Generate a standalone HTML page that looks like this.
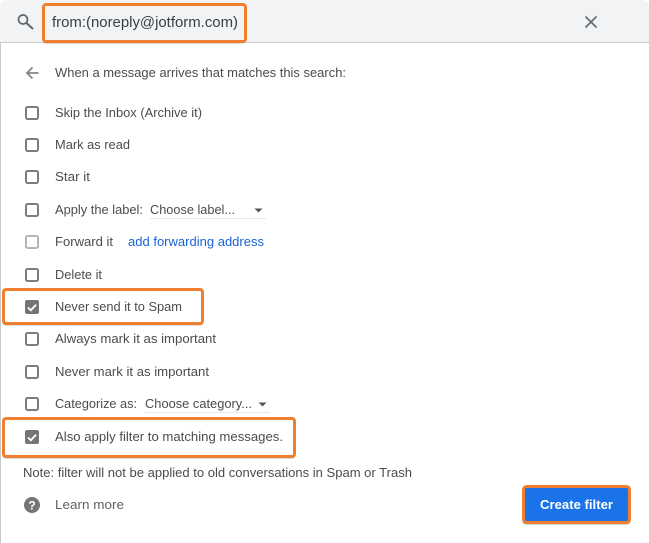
<!DOCTYPE html>
<html lang="en"><head><meta charset="utf-8"><title>Create filter</title>
<style>
html,body{margin:0;padding:0;background:#fff;width:649px;height:543px;overflow:hidden}
svg{display:block;filter:blur(.3px)}
text{font-family:"Liberation Sans",Arial,sans-serif;font-size:13px;fill:#4a4c4e}
.b{fill:none;stroke:#7d7d7d;stroke-width:2}
.o{fill:none;stroke:#f08030;stroke-width:3}
.s{fill:none;stroke:#777;stroke-width:1;opacity:.55}
</style></head><body>
<svg width="649" height="543" viewBox="0 0 649 543" xmlns="http://www.w3.org/2000/svg">
<rect x="0" y="0" width="649" height="543" fill="#fff"/>
<path d="M0 42V8Q0 0 8 0H641Q649 0 649 8V42Z" fill="#f1f3f4"/>
<rect x="0" y="42" width="649" height="1" fill="#cbcbcb"/>
<rect x="0" y="43" width="1" height="500" fill="#c8c8c8"/>

<circle cx="23" cy="19.500" r="4.500" fill="none" stroke="#5f6368" stroke-width="1.700"/>
<path d="M26.500 23L33 29" stroke="#5f6368" stroke-width="1.900" fill="none"/>
<path d="M585.500 16.500L596.500 27.500M596.500 16.500L585.500 27.500" stroke="#686b70" stroke-width="1.700" fill="none"/>
<path d="M38.500 73H27.500M32.500 67.500L27 73L32.500 78.500" stroke="#858585" stroke-width="1.800" fill="none"/>

<text x="52" y="27" style="font-size:14.500px;fill:#3c4043" textLength="186" lengthAdjust="spacingAndGlyphs">from:(noreply@jotform.com)</text>
<text x="55" y="77" textLength="291" lengthAdjust="spacingAndGlyphs">When a message arrives that matches this search:</text>

<rect x="26" y="107" width="12" height="12" rx="1.500" class="b"/>
<rect x="26" y="139" width="12" height="12" rx="1.500" class="b"/>
<rect x="26" y="171" width="12" height="12" rx="1.500" class="b"/>
<rect x="26" y="204" width="12" height="12" rx="1.500" class="b"/>
<rect x="26" y="236" width="12" height="12" rx="1.500" class="b" style="stroke:#b5b5b5"/>
<rect x="26" y="269" width="12" height="12" rx="1.500" class="b"/>
<rect x="25" y="300" width="14" height="14" rx="2" fill="#757575"/>
<path d="M28 307.500L30.800 310.300L36 304.800" stroke="#fff" stroke-width="1.800" fill="none"/>
<rect x="26" y="333" width="12" height="12" rx="1.500" class="b"/>
<rect x="26" y="366" width="12" height="12" rx="1.500" class="b"/>
<rect x="26" y="398" width="12" height="12" rx="1.500" class="b"/>
<rect x="25" y="430" width="14" height="14" rx="2" fill="#757575"/>
<path d="M28 437.500L30.800 440.300L36 434.800" stroke="#fff" stroke-width="1.800" fill="none"/>

<text x="55" y="117" textLength="147" lengthAdjust="spacingAndGlyphs">Skip the Inbox (Archive it)</text>
<text x="55" y="149" textLength="75" lengthAdjust="spacingAndGlyphs">Mark as read</text>
<text x="55" y="181" textLength="35" lengthAdjust="spacingAndGlyphs">Star it</text>
<text x="55" y="214" textLength="88" lengthAdjust="spacingAndGlyphs">Apply the label:</text>
<text x="150" y="214" textLength="85" lengthAdjust="spacingAndGlyphs">Choose label...</text>
<rect x="150" y="218" width="116" height="1" fill="#e8e8e8"/>
<path d="M254.500 208.500H262.500L258.500 212.500Z" fill="#555"/>
<text x="55" y="246" textLength="58" lengthAdjust="spacingAndGlyphs">Forward it</text>
<text x="128" y="246" style="fill:#1a62d6" textLength="136" lengthAdjust="spacingAndGlyphs">add forwarding address</text>
<text x="55" y="279" textLength="47" lengthAdjust="spacingAndGlyphs">Delete it</text>
<text x="55" y="311" textLength="127" lengthAdjust="spacingAndGlyphs">Never send it to Spam</text>
<text x="55" y="343" textLength="161" lengthAdjust="spacingAndGlyphs">Always mark it as important</text>
<text x="55" y="376" textLength="154" lengthAdjust="spacingAndGlyphs">Never mark it as important</text>
<text x="55" y="408" textLength="82" lengthAdjust="spacingAndGlyphs">Categorize as:</text>
<text x="145" y="408" textLength="107" lengthAdjust="spacingAndGlyphs">Choose category...</text>
<rect x="145" y="412" width="125" height="1" fill="#e8e8e8"/>
<path d="M258.500 402.500H266.500L262.500 406.500Z" fill="#555"/>
<text x="55" y="441" textLength="228" lengthAdjust="spacingAndGlyphs">Also apply filter to matching messages.</text>
<text x="23" y="477" textLength="389" lengthAdjust="spacingAndGlyphs">Note: filter will not be applied to old conversations in Spam or Trash</text>
<circle cx="32" cy="505" r="8" fill="#757575"/>
<text x="32" y="509.500" text-anchor="middle" style="font-size:12px;font-weight:bold;fill:#fff">?</text>
<text x="55" y="509" style="fill:#5f6368" textLength="69" lengthAdjust="spacingAndGlyphs">Learn more</text>

<rect x="523.500" y="486.500" width="106" height="36" rx="3" fill="#1a73e8"/>
<text x="540" y="509" style="fill:#fff;font-weight:bold" textLength="73" lengthAdjust="spacingAndGlyphs">Create filter</text>

<rect x="43" y="5" width="202" height="38" rx="3" class="s"/>
<rect x="3" y="290" width="200" height="35" rx="3" class="s"/>
<rect x="3" y="419" width="292" height="39" rx="3" class="s"/>
<rect x="523" y="487" width="107" height="37" rx="3" class="s"/>
<rect x="43.500" y="4.500" width="202" height="37" rx="2.500" class="o"/>
<rect x="3.500" y="289.500" width="199" height="34" rx="2.500" class="o"/>
<rect x="3.500" y="418.500" width="291" height="38" rx="2.500" class="o"/>
<rect x="523.500" y="486.500" width="106" height="36" rx="3" class="o"/>
</svg>
</body></html>
